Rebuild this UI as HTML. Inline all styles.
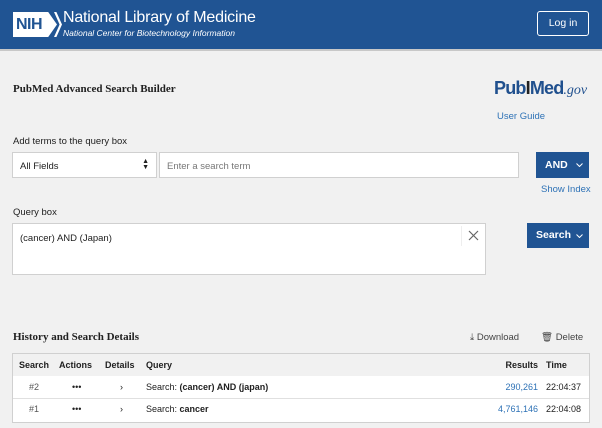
<!DOCTYPE html>
<html><head><style>
*{margin:0;padding:0;box-sizing:border-box}
body{width:602px;height:428px;background:#f1f1f1;font-family:"Liberation Sans",sans-serif;font-size:10px;color:#212121;position:relative;overflow:hidden}
.a{position:absolute;white-space:nowrap}
.hdr{left:0;top:0;width:602px;height:51px;background:#205493;border-bottom:2px solid #c8c8c8}
.btn{background:#205493;color:#fff;font-weight:bold;font-size:10.5px}
.lnk{color:#2e72b6}
.box{background:#fff;border:1px solid #d0d0d0}
td{font-size:9px;height:22px;white-space:nowrap}
.chev{position:absolute;right:6px;top:50%;margin-top:-2px}
</style></head><body>
<div class="a hdr">
 <div class="a" style="left:13px;top:12px;width:44px;height:25px;background:#fff;clip-path:polygon(0 0,80% 0,100% 50%,80% 100%,0 100%);color:#205493;font-weight:bold;font-size:16px;line-height:25px;padding-left:3px;letter-spacing:-0.5px">NIH</div>
 <div class="a" style="left:54px;top:12px;width:8px;height:25px;background:#fff;clip-path:polygon(0 0,30% 0,100% 50%,30% 100%,0 100%,70% 50%)"></div>
 <div class="a" style="left:63px;top:9px;color:#fff;font-size:16px;letter-spacing:-0.2px">National Library of Medicine</div>
 <div class="a" style="left:63px;top:28px;color:#fff;font-size:8.5px;font-style:italic">National Center for Biotechnology Information</div>
 <div class="a" style="left:537px;top:11px;width:52px;height:25px;border:1px solid #fff;border-radius:3px;color:#fff;font-size:10.5px;text-align:center;line-height:23px">Log in</div>
</div>
<div class="a" style="left:13px;top:83px;font-family:'Liberation Serif',serif;font-weight:bold;font-size:11px">PubMed Advanced Search Builder</div>
<div class="a" style="left:494px;top:78px;font-size:18px;font-weight:bold;color:#20508e;letter-spacing:-0.8px">Pub<span style="color:#222">I</span>Med<span style="font-family:'Liberation Serif',serif;font-style:italic;font-weight:normal;font-size:14px;letter-spacing:0">.gov</span></div>
<div class="a lnk" style="left:497px;top:111px;font-size:9.5px">User Guide</div>
<div class="a" style="left:13px;top:136px;font-size:9.5px">Add terms to the query box</div>
<div class="a box" style="left:12px;top:152px;width:145px;height:26px;padding:8px 7px;font-size:9.5px">All Fields<span style="position:absolute;right:7px;top:6px;font-size:7px;line-height:6px">▲<br>▼</span></div>
<div class="a box" style="left:159px;top:152px;width:360px;height:26px;padding:8px 7px;color:#777;font-size:9.5px">Enter a search term</div>
<div class="a btn" style="left:536px;top:152px;width:53px;height:26px;line-height:26px;padding-left:9px">AND<svg class="chev" width="7" height="4" viewBox="0 0 7 4"><path d="M0.5 0.5L3.5 3.5L6.5 0.5" stroke="#fff" fill="none" stroke-width="1"/></svg></div>
<div class="a lnk" style="left:541px;top:184px;font-size:9.5px">Show Index</div>
<div class="a" style="left:13px;top:207px;font-size:9.5px">Query box</div>
<div class="a box" style="left:12px;top:223px;width:474px;height:52px;padding:9px 7px;font-size:9.5px">(cancer) AND (Japan)</div>
<div class="a" style="left:461px;top:226px;width:24px;height:20px;border-left:1px solid #eee"><svg width="24" height="20"><path d="M7 5L16 14M16 5L7 14" stroke="#666" stroke-width="1.2"/></svg></div>
<div class="a btn" style="left:527px;top:223px;width:62px;height:25px;line-height:25px;padding-left:9px">Search<svg class="chev" width="7" height="4" viewBox="0 0 7 4"><path d="M0.5 0.5L3.5 3.5L6.5 0.5" stroke="#fff" fill="none" stroke-width="1"/></svg></div>
<div class="a" style="left:13px;top:331px;font-family:'Liberation Serif',serif;font-weight:bold;font-size:11px">History and Search Details</div>
<div class="a" style="left:470px;top:332px;font-size:9.5px;color:#444">⤓ Download</div>
<div class="a" style="left:541px;top:332px;font-size:9.5px;color:#444">🗑 Delete</div>
<div class="a" style="left:12px;top:353px;width:578px;height:70px;border:1px solid #d0d0d0;background:#fff">
<table style="border-collapse:collapse;width:100%">
<tr style="background:#f1f1f1"><td style="padding-left:6px;width:46px;font-weight:bold">Search</td><td style="width:46px;font-weight:bold">Actions</td><td style="width:41px;font-weight:bold">Details</td><td style="font-weight:bold">Query</td><td style="text-align:right;font-weight:bold;padding-right:8px">Results</td><td style="width:43px;font-weight:bold">Time</td></tr>
<tr style="border-bottom:1px solid #e0e0e0"><td style="padding-left:16px;color:#555">#2</td><td style="padding-left:13px">•••</td><td style="padding-left:15px">›</td><td>Search: <b>(cancer) AND (japan)</b></td><td class="lnk" style="text-align:right;padding-right:8px">290,261</td><td>22:04:37</td></tr>
<tr><td style="padding-left:16px;color:#555">#1</td><td style="padding-left:13px">•••</td><td style="padding-left:15px">›</td><td>Search: <b>cancer</b></td><td class="lnk" style="text-align:right;padding-right:8px">4,761,146</td><td>22:04:08</td></tr>
</table></div>
</body></html>
